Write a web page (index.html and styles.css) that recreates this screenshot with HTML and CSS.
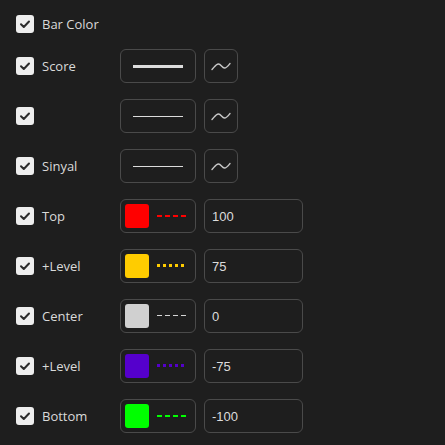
FILE: index.html
```html
<!DOCTYPE html>
<html>
<head>
<meta charset="utf-8">
<link rel="stylesheet" href="styles.css">
</head>
<body>
<div class="panel">
  <div class="row first">
    <div class="check"><svg width="18" height="18" viewBox="0 0 18 18"><path d="M5 9.2 L7.8 12 L13 6.5" fill="none" stroke="#2b2b2b" stroke-width="2" stroke-linecap="round" stroke-linejoin="round"/></svg></div>
    <span class="label">Bar Color</span>
  </div>

  <div class="row">
    <div class="check"><svg width="18" height="18" viewBox="0 0 18 18"><path d="M5 9.2 L7.8 12 L13 6.5" fill="none" stroke="#2b2b2b" stroke-width="2" stroke-linecap="round" stroke-linejoin="round"/></svg></div>
    <span class="label">Score</span>
    <div class="btn line-btn"><span class="line thick"></span></div>
    <div class="btn wave-btn"><svg width="20" height="10" viewBox="0 0 20 10"><path d="M1 8.5 C3 6.5 5 3 7.5 3 C10 3 11 7 13.5 7 C15.5 7 17 5 19 2.5" fill="none" stroke="#c8c8c8" stroke-width="1.4" stroke-linecap="round"/></svg></div>
  </div>

  <div class="row">
    <div class="check"><svg width="18" height="18" viewBox="0 0 18 18"><path d="M5 9.2 L7.8 12 L13 6.5" fill="none" stroke="#2b2b2b" stroke-width="2" stroke-linecap="round" stroke-linejoin="round"/></svg></div>
    <span class="label"></span>
    <div class="btn line-btn"><span class="line"></span></div>
    <div class="btn wave-btn"><svg width="20" height="10" viewBox="0 0 20 10"><path d="M1 8.5 C3 6.5 5 3 7.5 3 C10 3 11 7 13.5 7 C15.5 7 17 5 19 2.5" fill="none" stroke="#c8c8c8" stroke-width="1.4" stroke-linecap="round"/></svg></div>
  </div>

  <div class="row">
    <div class="check"><svg width="18" height="18" viewBox="0 0 18 18"><path d="M5 9.2 L7.8 12 L13 6.5" fill="none" stroke="#2b2b2b" stroke-width="2" stroke-linecap="round" stroke-linejoin="round"/></svg></div>
    <span class="label">Sinyal</span>
    <div class="btn line-btn"><span class="line"></span></div>
    <div class="btn wave-btn"><svg width="20" height="10" viewBox="0 0 20 10"><path d="M1 8.5 C3 6.5 5 3 7.5 3 C10 3 11 7 13.5 7 C15.5 7 17 5 19 2.5" fill="none" stroke="#c8c8c8" stroke-width="1.4" stroke-linecap="round"/></svg></div>
  </div>

  <div class="row">
    <div class="check"><svg width="18" height="18" viewBox="0 0 18 18"><path d="M5 9.2 L7.8 12 L13 6.5" fill="none" stroke="#2b2b2b" stroke-width="2" stroke-linecap="round" stroke-linejoin="round"/></svg></div>
    <span class="label">Top</span>
    <div class="btn color-btn">
      <span class="swatch red"></span>
      <svg width="30" height="4" viewBox="0 0 30 4"><line x1="0" y1="2" x2="29" y2="2" stroke="#ff0000" stroke-width="2" stroke-dasharray="5 3"/></svg>
    </div>
    <div class="btn input">100</div>
  </div>

  <div class="row">
    <div class="check"><svg width="18" height="18" viewBox="0 0 18 18"><path d="M5 9.2 L7.8 12 L13 6.5" fill="none" stroke="#2b2b2b" stroke-width="2" stroke-linecap="round" stroke-linejoin="round"/></svg></div>
    <span class="label">+Level</span>
    <div class="btn color-btn">
      <span class="swatch yellow"></span>
      <svg width="30" height="4" viewBox="0 0 30 4"><line x1="0" y1="1.5" x2="27" y2="1.5" stroke="#ffcc00" stroke-width="3" stroke-dasharray="3 3"/></svg>
    </div>
    <div class="btn input">75</div>
  </div>

  <div class="row">
    <div class="check"><svg width="18" height="18" viewBox="0 0 18 18"><path d="M5 9.2 L7.8 12 L13 6.5" fill="none" stroke="#2b2b2b" stroke-width="2" stroke-linecap="round" stroke-linejoin="round"/></svg></div>
    <span class="label">Center</span>
    <div class="btn color-btn">
      <span class="swatch gray"></span>
      <svg width="30" height="4" viewBox="0 0 30 4"><line x1="0" y1="1.5" x2="29" y2="1.5" stroke="#d6d6d6" stroke-width="1" stroke-dasharray="5 3"/></svg>
    </div>
    <div class="btn input">0</div>
  </div>

  <div class="row">
    <div class="check"><svg width="18" height="18" viewBox="0 0 18 18"><path d="M5 9.2 L7.8 12 L13 6.5" fill="none" stroke="#2b2b2b" stroke-width="2" stroke-linecap="round" stroke-linejoin="round"/></svg></div>
    <span class="label">+Level</span>
    <div class="btn color-btn">
      <span class="swatch purple"></span>
      <svg width="30" height="4" viewBox="0 0 30 4"><line x1="0" y1="1.5" x2="27" y2="1.5" stroke="#5500cc" stroke-width="3" stroke-dasharray="3 3"/></svg>
    </div>
    <div class="btn input">-75</div>
  </div>

  <div class="row">
    <div class="check"><svg width="18" height="18" viewBox="0 0 18 18"><path d="M5 9.2 L7.8 12 L13 6.5" fill="none" stroke="#2b2b2b" stroke-width="2" stroke-linecap="round" stroke-linejoin="round"/></svg></div>
    <span class="label">Bottom</span>
    <div class="btn color-btn">
      <span class="swatch green"></span>
      <svg width="30" height="4" viewBox="0 0 30 4"><line x1="0" y1="2" x2="29" y2="2" stroke="#00ff00" stroke-width="2" stroke-dasharray="5 3"/></svg>
    </div>
    <div class="btn input">-100</div>
  </div>
</div>
</body>
</html>
```

FILE: styles.css
```css
html, body {
  margin: 0;
  padding: 0;
  background: #1e1e1e;
  width: 445px;
  height: 445px;
  overflow: hidden;
}

.panel {
  display: flex;
  flex-direction: column;
  gap: 16px;
  padding: 15px 16px;
  font-family: "Liberation Sans", Arial, sans-serif;
  font-size: 13px;
  color: #d6d6d6;
}

.row {
  display: flex;
  align-items: center;
  height: 34px;
}

.row.first {
  height: 18px;
}

.check {
  width: 18px;
  height: 18px;
  border-radius: 3px;
  background: #eeeeee;
  flex: none;
}

.check svg {
  display: block;
}

.label {
  width: 78px;
  margin-left: 8px;
  flex: none;
  white-space: nowrap;
  font-family: "Open Sans", "Liberation Sans", sans-serif;
  font-size: 13px;
  font-weight: 500;
  color: #dadada;
}

.btn {
  box-sizing: border-box;
  height: 34px;
  border: 1px solid #4a4a4a;
  border-radius: 6px;
  display: flex;
  align-items: center;
  flex: none;
}

.line-btn {
  width: 76px;
  justify-content: center;
}

.line {
  display: block;
  width: 50px;
  height: 1px;
  background: #dcdcdc;
}

.line.thick {
  height: 3px;
}

.wave-btn {
  width: 34px;
  margin-left: 8px;
  justify-content: center;
}

.wave-btn svg {
  display: block;
}

.color-btn {
  width: 76px;
  padding-left: 4px;
  gap: 8px;
}

.color-btn svg {
  display: block;
}

.swatch {
  width: 24px;
  height: 24px;
  border-radius: 3px;
  display: block;
}

.red { background: #ff0000; }
.yellow { background: #ffcc00; }
.gray { background: #d0d0d0; }
.purple { background: #5500cc; }
.green { background: #00ff00; }

.input {
  width: 99px;
  margin-left: 8px;
  padding-left: 7px;
  color: #dcdcdc;
  font-size: 13px;
}
```
